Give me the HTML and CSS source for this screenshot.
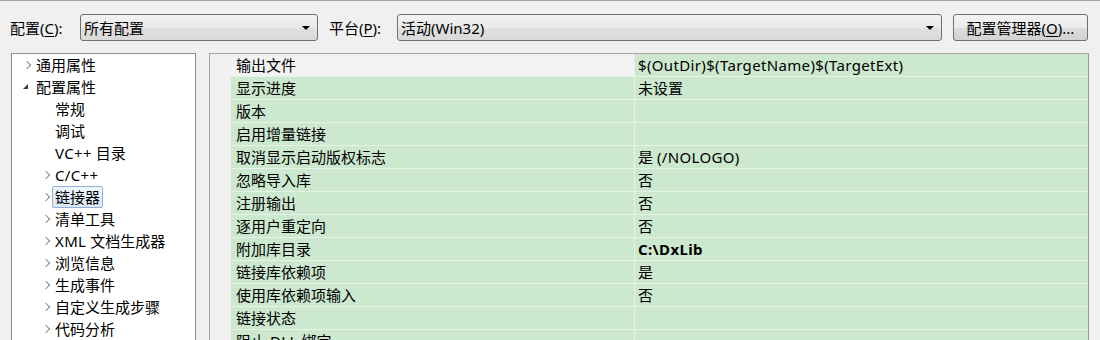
FILE: index.html
```html
<!DOCTYPE html>
<html lang="zh-CN">

<head>
    <meta charset="UTF-8">
    <meta name="viewport" content="width=device-width, initial-scale=1.0">
    <title>属性页</title>

    <link rel="stylesheet" href="styles.css">
</head>

<body>
    <div class="toolbar">
        <label class="tool-label label-config">配置(<u>C</u>):</label>
        <div class="combo combo-config">
            <span>所有配置</span>
            <span class="combo-arrow"></span>
        </div>
        <label class="tool-label label-platform">平台(<u>P</u>):</label>
        <div class="combo combo-platform">
            <span>活动(Win32)</span>
            <span class="combo-arrow"></span>
        </div>
        <button class="manager-button">配置管理器(<u>O</u>)...</button>
    </div>

    <div class="main">
        <!-- 左侧树 -->
        <div class="tree">
            <div class="tree-item level1"><span class="toggle closed"></span><span class="item-text">通用属性</span></div>
            <div class="tree-item level1"><span class="toggle open"></span><span class="item-text">配置属性</span></div>
            <div class="tree-item level2"><span class="toggle"></span><span class="item-text">常规</span></div>
            <div class="tree-item level2"><span class="toggle"></span><span class="item-text">调试</span></div>
            <div class="tree-item level2"><span class="toggle"></span><span class="item-text"><span class="latin">VC++</span> 目录</span></div>
            <div class="tree-item level2"><span class="toggle closed"></span><span class="item-text latin">C/C++</span></div>
            <div class="tree-item level2"><span class="toggle closed"></span><span class="item-text selected">链接器</span></div>
            <div class="tree-item level2"><span class="toggle closed"></span><span class="item-text">清单工具</span></div>
            <div class="tree-item level2"><span class="toggle closed"></span><span class="item-text"><span class="latin">XML</span> 文档生成器</span></div>
            <div class="tree-item level2"><span class="toggle closed"></span><span class="item-text">浏览信息</span></div>
            <div class="tree-item level2"><span class="toggle closed"></span><span class="item-text">生成事件</span></div>
            <div class="tree-item level2"><span class="toggle closed"></span><span class="item-text">自定义生成步骤</span></div>
            <div class="tree-item level2"><span class="toggle closed"></span><span class="item-text">代码分析</span></div>
        </div>

        <!-- 右侧属性表 -->
        <div class="grid">
            <div class="prop-row"><span class="strip"></span><span class="name current">输出文件</span><span class="value latin">$(OutDir)$(TargetName)$(TargetExt)</span></div>
            <div class="prop-row"><span class="strip"></span><span class="name">显示进度</span><span class="value">未设置</span></div>
            <div class="prop-row"><span class="strip"></span><span class="name">版本</span><span class="value"></span></div>
            <div class="prop-row"><span class="strip"></span><span class="name">启用增量链接</span><span class="value"></span></div>
            <div class="prop-row"><span class="strip"></span><span class="name">取消显示启动版权标志</span><span class="value">是 <span class="latin">(/NOLOGO)</span></span></div>
            <div class="prop-row"><span class="strip"></span><span class="name">忽略导入库</span><span class="value">否</span></div>
            <div class="prop-row"><span class="strip"></span><span class="name">注册输出</span><span class="value">否</span></div>
            <div class="prop-row"><span class="strip"></span><span class="name">逐用户重定向</span><span class="value">否</span></div>
            <div class="prop-row"><span class="strip"></span><span class="name">附加库目录</span><span class="value bold latin">C:\DxLib</span></div>
            <div class="prop-row"><span class="strip"></span><span class="name">链接库依赖项</span><span class="value">是</span></div>
            <div class="prop-row"><span class="strip"></span><span class="name">使用库依赖项输入</span><span class="value">否</span></div>
            <div class="prop-row"><span class="strip"></span><span class="name">链接状态</span><span class="value"></span></div>
            <div class="prop-row"><span class="strip"></span><span class="name">阻止 <span class="latin">DLL</span> 绑定</span><span class="value"></span></div>
            <div class="prop-row"><span class="strip"></span><span class="name">将链接器警告视为错误</span><span class="value"></span></div>
        </div>
    </div>
</body>

</html>
```

FILE: styles.css
```css
* {
    margin: 0;
    padding: 0;
    box-sizing: border-box;
}

body {
    width: 1100px;
    height: 340px;
    overflow: hidden;
    background-color: #f0f0f0;
    border-top: 1px solid #a0a0a0;
    font-family: "Noto Sans", "Noto Sans CJK SC", sans-serif;
    font-size: 15px;
    color: #000;
}

u {
    text-decoration: underline;
    text-underline-offset: 2px;
}

/* 拉丁字母稍宽一点 */
.latin {
    letter-spacing: 0.35px;
}

/* 顶部工具条 */
.toolbar {
    display: flex;
    align-items: center;
    padding: 13px 0 0 10px;
    height: 40px;
}

.tool-label {
    line-height: 26px;
}

.label-config {
    width: 70px;
}

.label-platform {
    width: 68px;
    margin-left: 11px;
}

.combo {
    display: flex;
    align-items: center;
    justify-content: space-between;
    height: 27px;
    padding: 0 5px 0 3px;
    border: 1px solid #707070;
    border-radius: 3px;
    background: linear-gradient(#f3f3f3, #e9e9e9 50%, #e0e0e0 52%, #dadada);
}

.combo-config {
    width: 238px;
}

.combo-platform {
    width: 545px;
}

.combo-arrow {
    width: 0;
    height: 0;
    margin-right: 2px;
    border-left: 4px solid transparent;
    border-right: 4px solid transparent;
    border-top: 4px solid #000;
}

.manager-button {
    width: 135px;
    height: 27px;
    margin-left: 11px;
    border: 1px solid #707070;
    border-radius: 3px;
    background: linear-gradient(#f3f3f3, #ebebeb 50%, #dddddd 52%, #d2d2d2);
    font: inherit;
    color: #000;
}

/* 主体 */
.main {
    display: flex;
    align-items: flex-start;
    margin-top: 12px;
    padding-left: 11px;
}

.tree {
    width: 185px;
    height: 320px;
    background-color: #fff;
    border: 1px solid #8e8f8f;
}

.tree-item {
    display: flex;
    align-items: center;
    height: 22px;
}

.level1 {
    padding-left: 8px;
}

.level2 {
    padding-left: 27px;
}

.toggle {
    width: 16px;
    height: 22px;
    flex-shrink: 0;
    position: relative;
}

.toggle.closed::before {
    content: "";
    position: absolute;
    left: 4px;
    top: 8px;
    width: 5px;
    height: 5px;
    border-right: 1px solid #8a8a8a;
    border-top: 1px solid #8a8a8a;
    transform: rotate(45deg);
}

.toggle.open::before {
    content: "";
    position: absolute;
    left: 3px;
    top: 8px;
    width: 0;
    height: 0;
    border-left: 5px solid transparent;
    border-bottom: 5px solid #3c3c3c;
}

.item-text {
    white-space: nowrap;
    line-height: 20px;
}

.selected {
    margin-left: -3px;
    padding: 0 2px;
    border: 1px solid #8fb0d8;
    border-radius: 2px;
    background: linear-gradient(#f2f7fd, #dde9f7);
}

.grid {
    width: 880px;
    height: 300px;
    margin-left: 13px;
    border: 1px solid #a5a5a5;
    border-right-color: #9a9a9a;
    overflow: hidden;
}

.prop-row {
    display: flex;
    height: 23px;
}

.strip {
    width: 21px;
    flex-shrink: 0;
    background-color: #f0f0f0;
}

.name,
.value {
    height: 23px;
    padding-left: 5px;
    line-height: 22px;
    background-color: #cce8cf;
    border-bottom: 1px solid #e6f3e7;
    white-space: nowrap;
}

.name {
    width: 404px;
    flex-shrink: 0;
    border-right: 1px solid #e6f3e7;
}

.name.current {
    background-color: #f2f2f2;
}

.value {
    flex: 1;
    padding-left: 3px;
}

.bold {
    font-weight: bold;
}
```
